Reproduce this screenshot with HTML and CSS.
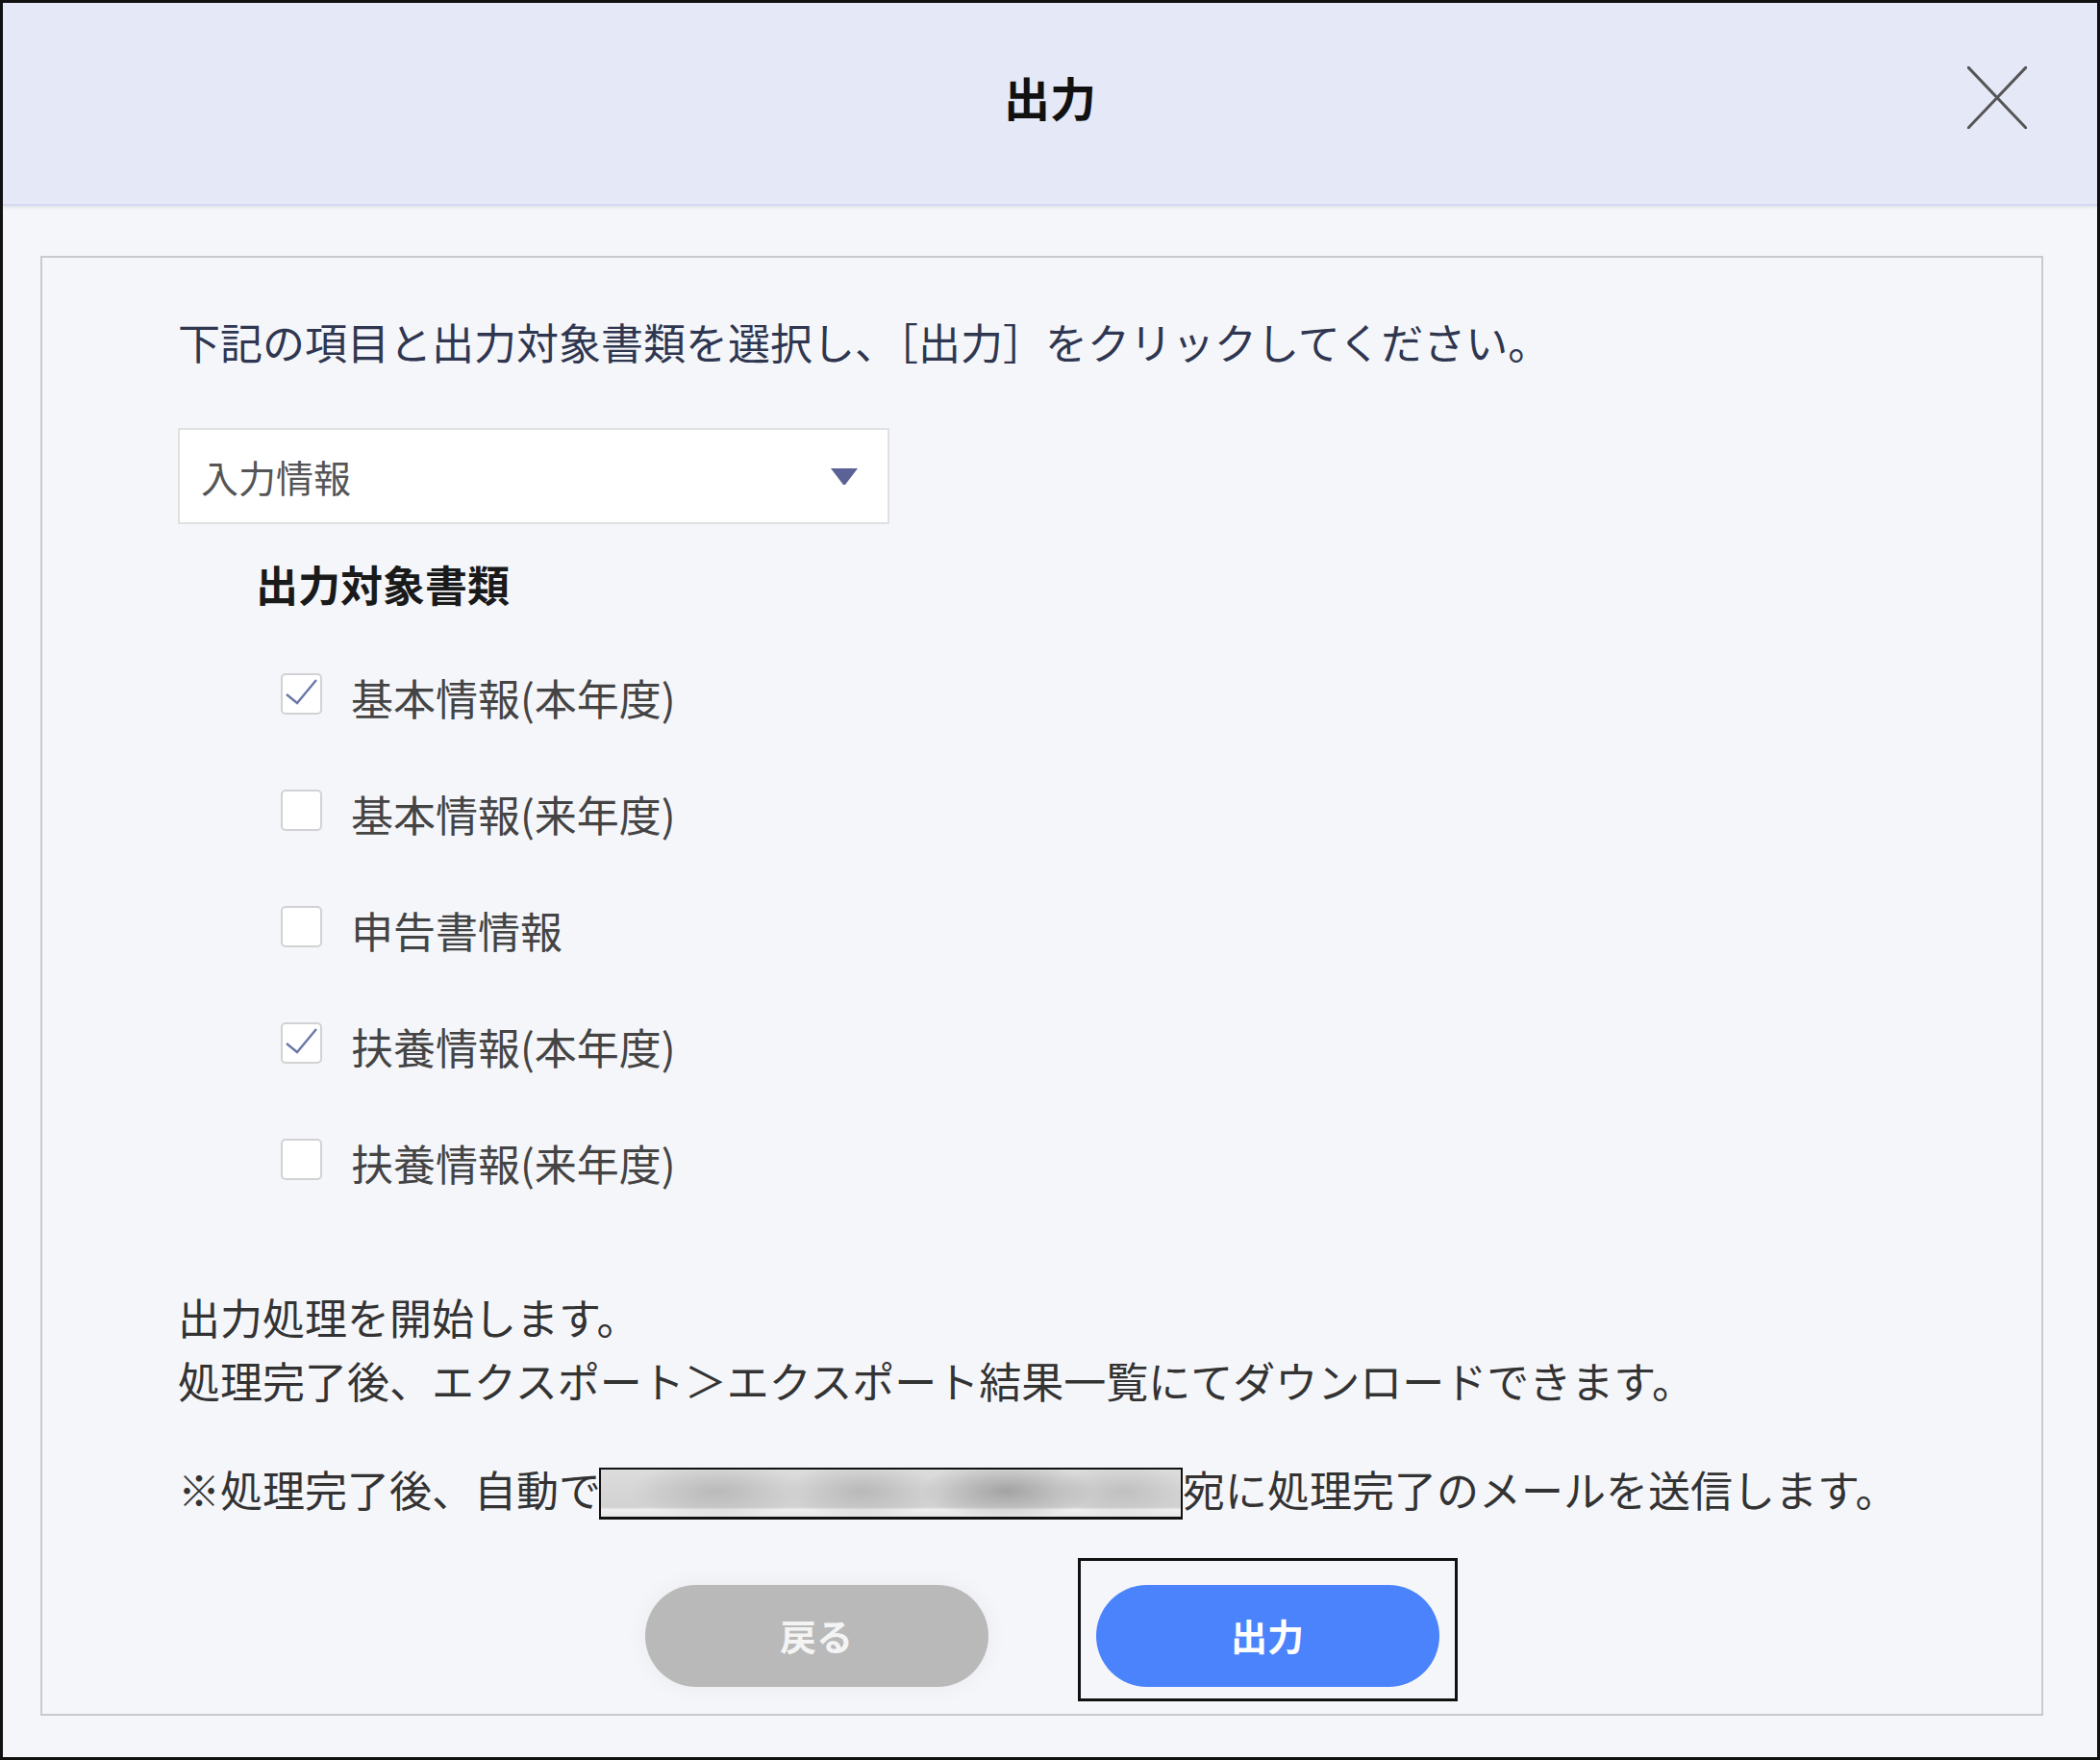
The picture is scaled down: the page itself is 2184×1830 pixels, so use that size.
FILE: index.html
```html
<!DOCTYPE html>
<html lang="ja">
<head>
<meta charset="utf-8">
<title>出力</title>
<link rel="stylesheet" href="styles.css">
</head>
<body>
<div class="dialog">
  <header class="header">
    <div class="header-side"></div>
    <h1 class="title">出力</h1>
    <div class="header-side header-right">
      <button class="close" aria-label="閉じる">
        <svg width="62" height="65" viewBox="0 0 62 65"><path d="M1 1 L61 64 M61 1 L1 64" stroke="#555" stroke-width="3" fill="none" stroke-linecap="round"/></svg>
      </button>
    </div>
  </header>
  <section class="panel">
    <p class="instruction">下記の項目と出力対象書類を選択し、［出力］をクリックしてください。</p>
    <div class="select">
      <span class="select-text">入力情報</span>
      <svg class="select-arrow" width="28" height="17" viewBox="0 0 28 17"><path d="M0 0 H28 L15 17 H13 Z" fill="#5b6296"/></svg>
    </div>
    <h2 class="heading">出力対象書類</h2>
    <ul class="checklist">
      <li class="row"><span class="box checked"><svg width="43" height="43" viewBox="0 0 43 43"><polyline points="6,22 17,31 37,7" fill="none" stroke="#6a78a8" stroke-width="2.4"/></svg></span><span class="label">基本情報(本年度)</span></li>
      <li class="row"><span class="box"></span><span class="label">基本情報(来年度)</span></li>
      <li class="row"><span class="box"></span><span class="label">申告書情報</span></li>
      <li class="row"><span class="box checked"><svg width="43" height="43" viewBox="0 0 43 43"><polyline points="6,22 17,31 37,7" fill="none" stroke="#6a78a8" stroke-width="2.4"/></svg></span><span class="label">扶養情報(本年度)</span></li>
      <li class="row"><span class="box"></span><span class="label">扶養情報(来年度)</span></li>
    </ul>
    <p class="note">出力処理を開始します。<br>処理完了後、エクスポート＞エクスポート結果一覧にてダウンロードできます。</p>
    <p class="note note-mail">※処理完了後、自動で<span class="redacted"></span>宛に処理完了のメールを送信します。</p>
    <div class="buttons">
      <button class="btn btn-back">戻る</button>
      <button class="btn btn-primary">出力</button>
    </div>
  </section>
</div>
</body>
</html>
```
FILE: styles.css
```css
* { box-sizing: border-box; }
html, body { margin: 0; padding: 0; }
body {
  width: 2184px;
  height: 1830px;
  background: #ffffff;
  font-family: "Noto Sans CJK JP", "Noto Sans", sans-serif;
}
.dialog {
  width: 2184px;
  height: 1830px;
  border: 3px solid #111;
  background: #f5f6fa;
  display: flex;
  flex-direction: column;
}
.header {
  height: 211px;
  flex: none;
  background: #e4e8f7;
  border-bottom: 2px solid #d4d8f0;
  box-shadow: 0 2px 3px rgba(0, 0, 0, 0.07);
  display: grid;
  grid-template-columns: 1fr auto 1fr;
  align-items: center;
}
.title {
  margin: 0;
  padding-bottom: 16px;
  font-size: 48px;
  font-weight: 700;
  line-height: 60px;
  color: #111;
}
.header-right {
  display: flex;
  justify-content: flex-end;
  padding-right: 73px;
}
.close {
  border: 0;
  background: transparent;
  padding: 0;
  margin: 0 0 12px 0;
  display: block;
  line-height: 0;
}
.panel {
  flex: 1;
  margin: 52px 56px 43px 39px;
  border: 2px solid #cacaca;
  background: #f5f6fa;
  padding: 57px 0 0 141px;
  display: flex;
  flex-direction: column;
}
.instruction {
  margin: 0;
  font-size: 44px;
  line-height: 60px;
  color: #2f3650;
  white-space: nowrap;
}
.select {
  margin-top: 60px;
  width: 740px;
  height: 100px;
  background: #fff;
  border: 2px solid #e0e0e2;
  display: flex;
  align-items: center;
  justify-content: space-between;
  padding: 0 31px 0 22px;
}
.select-text {
  font-size: 39px;
  color: #555;
  line-height: 1;
}
.select-arrow { display: block; }
.heading {
  margin: 32px 0 0 81px;
  font-size: 44px;
  font-weight: 700;
  line-height: 60px;
  color: #1a1a1a;
}
.checklist {
  list-style: none;
  margin: 27px 0 0 107px;
  padding: 0;
}
.row {
  height: 121px;
  display: flex;
  align-items: center;
}
.box {
  width: 43px;
  height: 43px;
  flex: none;
  background: #fff;
  border: 2px solid #d2d2d4;
  border-radius: 5px;
  position: relative;
  margin-top: -6px;
}
.box svg {
  position: absolute;
  left: -2px;
  top: -2px;
}
.label {
  margin-left: 30px;
  font-size: 44px;
  line-height: 56px;
  color: #444;
}
.note {
  margin: 67px 0 0 0;
  font-size: 44px;
  line-height: 66px;
  color: #333;
  white-space: nowrap;
}
.note-mail {
  margin-top: 47px;
}
.redacted {
  display: inline-block;
  width: 607px;
  height: 54px;
  vertical-align: middle;
  margin-top: -4px;
  margin-left: -2px;
  border: 2px solid #111;
  border-bottom-width: 3px;
  background:
    radial-gradient(ellipse 90px 30px at 20% 45%, rgba(150,150,150,0.45), transparent),
    radial-gradient(ellipse 80px 30px at 45% 45%, rgba(140,140,140,0.4), transparent),
    radial-gradient(ellipse 90px 30px at 70% 45%, rgba(120,120,120,0.55), transparent),
    radial-gradient(ellipse 70px 28px at 90% 45%, rgba(150,150,150,0.35), transparent),
    linear-gradient(#dcdcdc, #d2d2d2 80%, #f0f0f0 85%, #e6e6e6);
}
.buttons {
  margin: 67px 0 0 -141px;
  display: flex;
  justify-content: center;
  gap: 112px;
}
.btn {
  width: 357px;
  height: 106px;
  border: 0;
  border-radius: 53px;
  font-family: "Noto Sans CJK JP", "Noto Sans", sans-serif;
  font-size: 38px;
  font-weight: 700;
  color: #fff;
  padding: 0 0 4px 0;
}
.btn-back {
  background: #b9b9b9;
  color: #f4f4f4;
  box-shadow: 0 0 24px rgba(0, 0, 0, 0.05);
}
.btn-primary {
  background: #4a83fb;
  position: relative;
}
.btn-primary::after {
  content: "";
  position: absolute;
  left: -19px;
  right: -19px;
  top: -28px;
  bottom: -15px;
  border: 3px solid #111;
  pointer-events: none;
}
```
